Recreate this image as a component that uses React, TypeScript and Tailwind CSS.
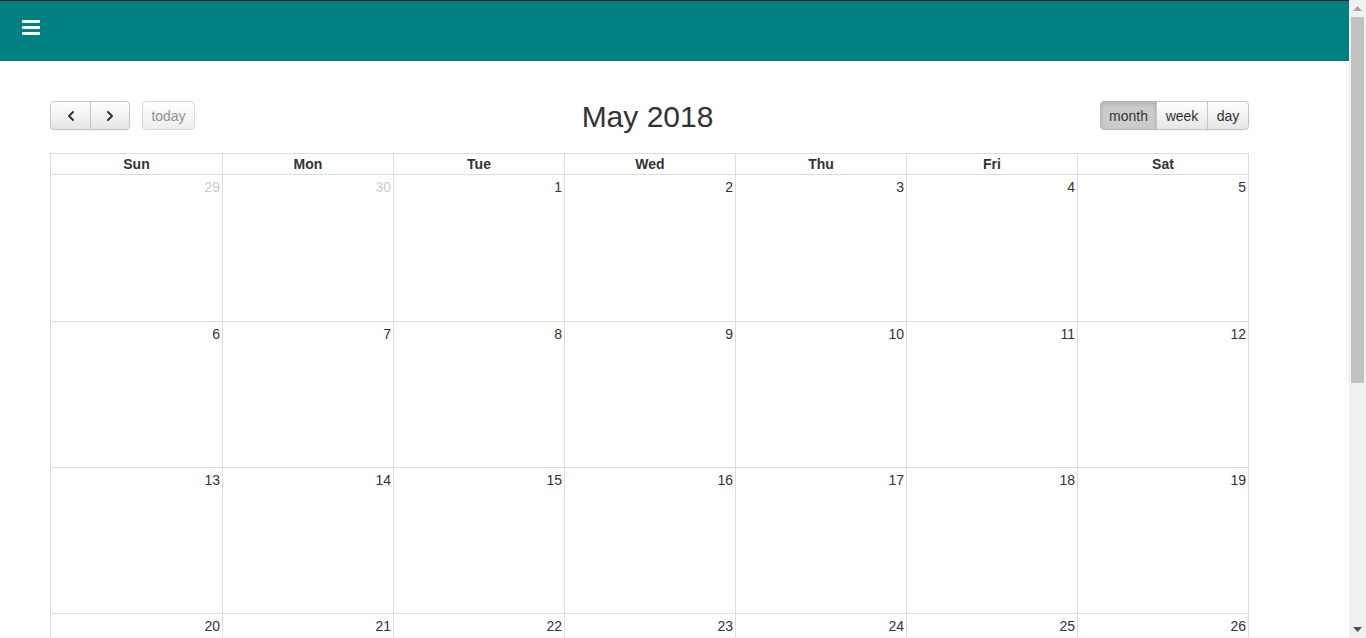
import { ChevronLeft, ChevronRight } from 'lucide-react'

const days = ['Sun', 'Mon', 'Tue', 'Wed', 'Thu', 'Fri', 'Sat']

const weeks: { n: number; other?: boolean }[][] = [
  [{ n: 29, other: true }, { n: 30, other: true }, { n: 1 }, { n: 2 }, { n: 3 }, { n: 4 }, { n: 5 }],
  [6, 7, 8, 9, 10, 11, 12].map((n) => ({ n })),
  [13, 14, 15, 16, 17, 18, 19].map((n) => ({ n })),
  [20, 21, 22, 23, 24, 25, 26].map((n) => ({ n })),
]

const btn =
  'h-[29px] pt-px text-[14px] text-[#333] border border-[#c6c6c6] bg-gradient-to-b from-white to-[#e6e6e6] shadow-[inset_0_1px_0_rgba(255,255,255,0.2),0_1px_2px_rgba(0,0,0,0.05)]'

export default function App() {
  return (
    <div className="flex h-[638px] w-[1366px] overflow-hidden bg-white font-['Liberation_Sans',Arial,sans-serif]">
      <div className="flex-1 overflow-hidden">
        <header className="h-[61px] border-t border-[#222] bg-[#008080] flex items-center px-[22px]">
          <div className="flex flex-col gap-[3px] w-[18px] -mt-[8px]">
            <span className="h-[3px] bg-white rounded-[1px]" />
            <span className="h-[3px] bg-white rounded-[1px]" />
            <span className="h-[3px] bg-white rounded-[1px]" />
          </div>
        </header>

        <div className="ml-[50px] w-[1199px] pt-[40px]">
          <div className="relative flex items-center justify-between h-[29px] mb-[23px]">
            <div className="flex items-center gap-[12px]">
              <div className="flex">
                <button className={`${btn} w-[41px] rounded-l-[4px] flex items-center justify-center`}>
                  <ChevronLeft className="h-4 w-4" strokeWidth={3} />
                </button>
                <button className={`${btn} w-[40px] -ml-px rounded-r-[4px] flex items-center justify-center`}>
                  <ChevronRight className="h-4 w-4" strokeWidth={3} />
                </button>
              </div>
              <button className={`${btn} w-[53px] rounded-[4px] opacity-65 text-[#555] shadow-none`}>today</button>
            </div>
            <h2 className="absolute left-1/2 -translate-x-1/2 top-[-1px] text-[30px] leading-[33px] text-[#333] -ml-[2px]">
              May 2018
            </h2>
            <div className="flex">
              <button className="h-[29px] pt-px w-[57px] text-[14px] text-[#333] border border-[#b8b8b8] bg-[#cccccc] rounded-l-[4px] shadow-[inset_0_2px_4px_rgba(0,0,0,0.15)]">
                month
              </button>
              <button className={`${btn} w-[52px] -ml-px`}>week</button>
              <button className={`${btn} w-[42px] -ml-px rounded-r-[4px]`}>day</button>
            </div>
          </div>

          <div className="border border-[#ddd]">
            <div className="grid grid-cols-7 h-[21px] border-b border-[#ddd]">
              {days.map((d, i) => (
                <div
                  key={d}
                  className={`text-center text-[14px] font-bold text-[#333] leading-[20px] ${i > 0 ? 'border-l border-[#ddd]' : ''}`}
                >
                  {d}
                </div>
              ))}
            </div>
            {weeks.map((w, wi) => (
              <div key={wi} className={`grid grid-cols-7 h-[146px] ${wi > 0 ? 'border-t border-[#ddd]' : ''}`}>
                {w.map((c, i) => (
                  <div key={i} className={`text-right pr-[2px] pt-0 ${i > 0 ? 'border-l border-[#ddd]' : ''}`}>
                    <span className={`text-[14px] leading-[16px] ${c.other ? 'text-[#ccc]' : 'text-[#333]'}`}>{c.n}</span>
                  </div>
                ))}
              </div>
            ))}
          </div>
        </div>
      </div>

      <div className="w-[17px] bg-[#f1f1f1] flex flex-col items-center">
        <div className="h-[17px] flex items-center justify-center">
          <svg width="9" height="5" viewBox="0 0 9 5"><path d="M0 5 L4.5 0 L9 5 Z" fill="#a3a3a3" /></svg>
        </div>
        <div className="w-[13px] h-[366px] bg-[#c1c1c1]" />
        <div className="flex-1" />
        <div className="h-[17px] flex items-center justify-center">
          <svg width="9" height="5" viewBox="0 0 9 5"><path d="M0 0 L9 0 L4.5 5 Z" fill="#505050" /></svg>
        </div>
      </div>
    </div>
  )
}
